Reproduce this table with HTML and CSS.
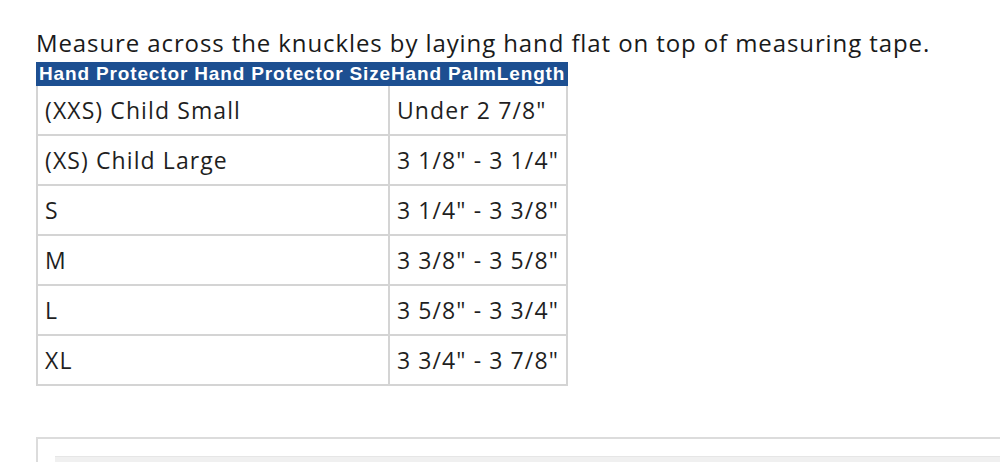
FILE: index.html
```html
<!DOCTYPE html>
<html>
<head>
<meta charset="utf-8">
<link rel="stylesheet" href="styles.css">
</head>
<body>
<div class="page">
  <p class="intro">Measure across the knuckles by laying hand flat on top of measuring tape.</p>
  <table class="sizes">
    <colgroup><col class="col1"><col class="col2"></colgroup>
    <thead>
      <tr><th colspan="2">Hand Protector Hand Protector SizeHand PalmLength</th></tr>
    </thead>
    <tbody>
      <tr><td>(XXS) Child Small</td><td>Under 2 7/8"</td></tr>
      <tr><td>(XS) Child Large</td><td>3 1/8" - 3 1/4"</td></tr>
      <tr><td>S</td><td>3 1/4" - 3 3/8"</td></tr>
      <tr><td>M</td><td>3 3/8" - 3 5/8"</td></tr>
      <tr><td>L</td><td>3 5/8" - 3 3/4"</td></tr>
      <tr><td>XL</td><td>3 3/4" - 3 7/8"</td></tr>
    </tbody>
  </table>
  <div class="box"><div class="bar"></div></div>
</div>
</body>
</html>
```

FILE: styles.css
```css
html, body { margin: 0; padding: 0; background: #fff; }
body { font-family: "Open Sans", "Liberation Sans", sans-serif; color: #222; overflow: hidden; }
.page { padding: 24px 0 0 36px; }
.intro { margin: 0; font-size: 24px; letter-spacing: 0.9px; line-height: 38px; color: #1a1a1a; white-space: nowrap; }
.sizes { border-collapse: collapse; width: 530px; table-layout: fixed; }
.col1 { width: 352px; }
.col2 { width: 178px; }
.sizes th {
  background: #1d4f91; color: #fff; text-align: left;
  font-family: "Liberation Sans", Arial, sans-serif; font-weight: bold;
  font-size: 19px; letter-spacing: 0.85px; line-height: 20px; height: 20px; padding: 0 0 0 1px; white-space: nowrap;
  border: 2px solid #1d4f91; overflow: hidden;
}
.sizes td {
  border: 2px solid #d4d4d4; height: 48px; padding: 0 7px;
  font-size: 23px; letter-spacing: 1.1px; color: #1f1f1f; vertical-align: middle; white-space: nowrap;
}
.box {
  margin-top: 51px; height: 40px; border: 2px solid #dcdcdc; border-right: none;
  padding: 17px 0 0 17px;
}
.bar { height: 20px; background: #f0f0f0; border-top: 1px solid #e6e6e6; }
```
